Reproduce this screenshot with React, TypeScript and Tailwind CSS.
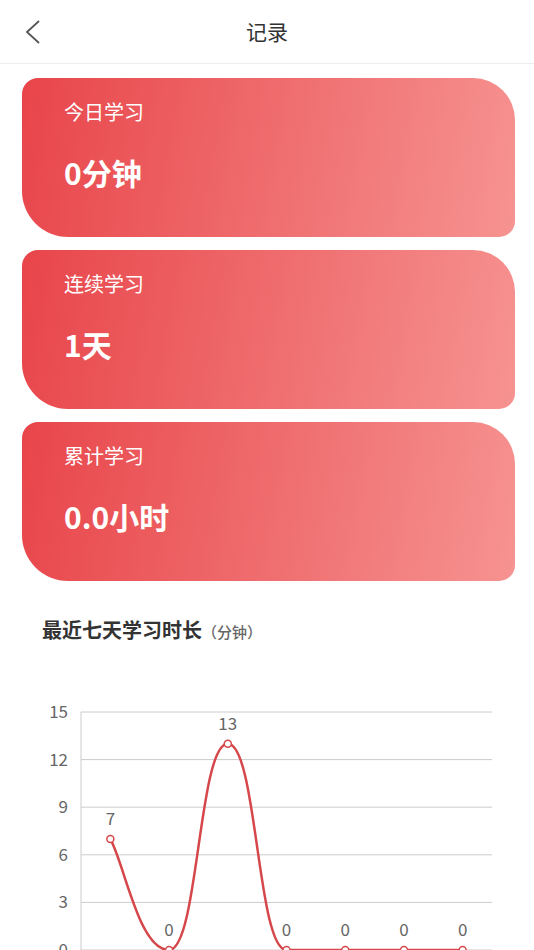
import React from "react";

const font = { fontFamily: '"Noto Sans CJK SC", "Noto Sans", sans-serif' };

type Stat = { label: string; value: string };

const stats: Stat[] = [
  { label: "今日学习", value: "0分钟" },
  { label: "连续学习", value: "1天" },
  { label: "累计学习", value: "0.0小时" },
];

const data = [7, 0, 13, 0, 0, 0, 0];

const StatCard = ({ stat }: { stat: Stat }) => (
  <div className="h-[159px] rounded-tl-[16px] rounded-tr-[42px] rounded-bl-[46px] rounded-br-[16px] bg-linear-[100deg] from-[#e8454a] to-[#f69391] pl-[42px] pt-[22px] text-white">
    <div className="text-[20px] leading-[24px]">{stat.label}</div>
    <div className="mt-[30px] text-[30px] font-bold leading-[36px]">
      {stat.value}
    </div>
  </div>
);

const Chart = () => {
  const left = 81;
  const right = 492;
  const top = 31;
  const bottom = 269;
  const step = (right - left) / data.length;
  const xs = data.map((_, i) => left + step * (i + 0.5));
  const y = (v: number) => bottom - (v * (bottom - top)) / 15;
  const ticks = [15, 12, 9, 6, 3, 0];
  const c = "#d5474b";
  const path = `M${xs[0]} ${y(7)} C${xs[0] + 15} ${y(7) + 28}, ${xs[1] - 30} ${y(0)}, ${xs[1]} ${y(0)} C${xs[1] + 29.3} ${y(0)}, ${xs[2] - 29.3} ${y(13)}, ${xs[2]} ${y(13)} C${xs[2] + 29.3} ${y(13)}, ${xs[3] - 29.3} ${y(0)}, ${xs[3]} ${y(0)} L${xs[6]} ${y(0)}`;

  return (
    <svg width="534" height="270" className="mt-[35px] block">
      {ticks.map((t) => (
        <g key={t}>
          <line
            x1={left}
            x2={right}
            y1={y(t)}
            y2={y(t)}
            stroke="#cccccc"
            strokeWidth="1"
          />
          <text
            x="68"
            y={y(t) + 6}
            textAnchor="end"
            fontSize="17"
            fill="#666666"
            style={font}
          >
            {t}
          </text>
        </g>
      ))}
      <line x1={left} x2={left} y1={top} y2={bottom} stroke="#cccccc" />
      <path d={path} fill="none" stroke={c} strokeWidth="2.5" />
      {data.map((v, i) => (
        <g key={i}>
          <circle
            cx={xs[i]}
            cy={y(v)}
            r="3.5"
            fill="#ffffff"
            stroke={c}
            strokeWidth="1.5"
          />
          <text
            x={xs[i]}
            y={y(v) - 14}
            textAnchor="middle"
            fontSize="17"
            fill="#666666"
            style={font}
          >
            {v}
          </text>
        </g>
      ))}
    </svg>
  );
};

export default function App() {
  return (
    <div className="h-[950px] w-[534px] overflow-hidden bg-white" style={font}>
      <div className="relative flex h-16 items-center justify-center border-b border-[#eeeeee]">
        <svg
          className="absolute left-[24px] top-[19px]"
          width="18"
          height="26"
          viewBox="0 0 18 26"
        >
          <polyline
            points="15,2 3,13 15,24"
            fill="none"
            stroke="#555555"
            strokeWidth="1.8"
          />
        </svg>
        <div className="text-[21px] text-[#333333]">记录</div>
      </div>
      <div className="ml-[22px] mr-[19px] mt-[14px] flex flex-col gap-[13px]">
        {stats.map((s) => (
          <StatCard key={s.label} stat={s} />
        ))}
      </div>
      <div className="ml-[42px] mt-[35px] flex items-baseline leading-[28px]">
        <span className="text-[20px] font-bold text-[#333333]">
          最近七天学习时长
        </span>
        <span className="text-[15px] font-medium text-[#666666]">（分钟）</span>
      </div>
      <Chart />
    </div>
  );
}
